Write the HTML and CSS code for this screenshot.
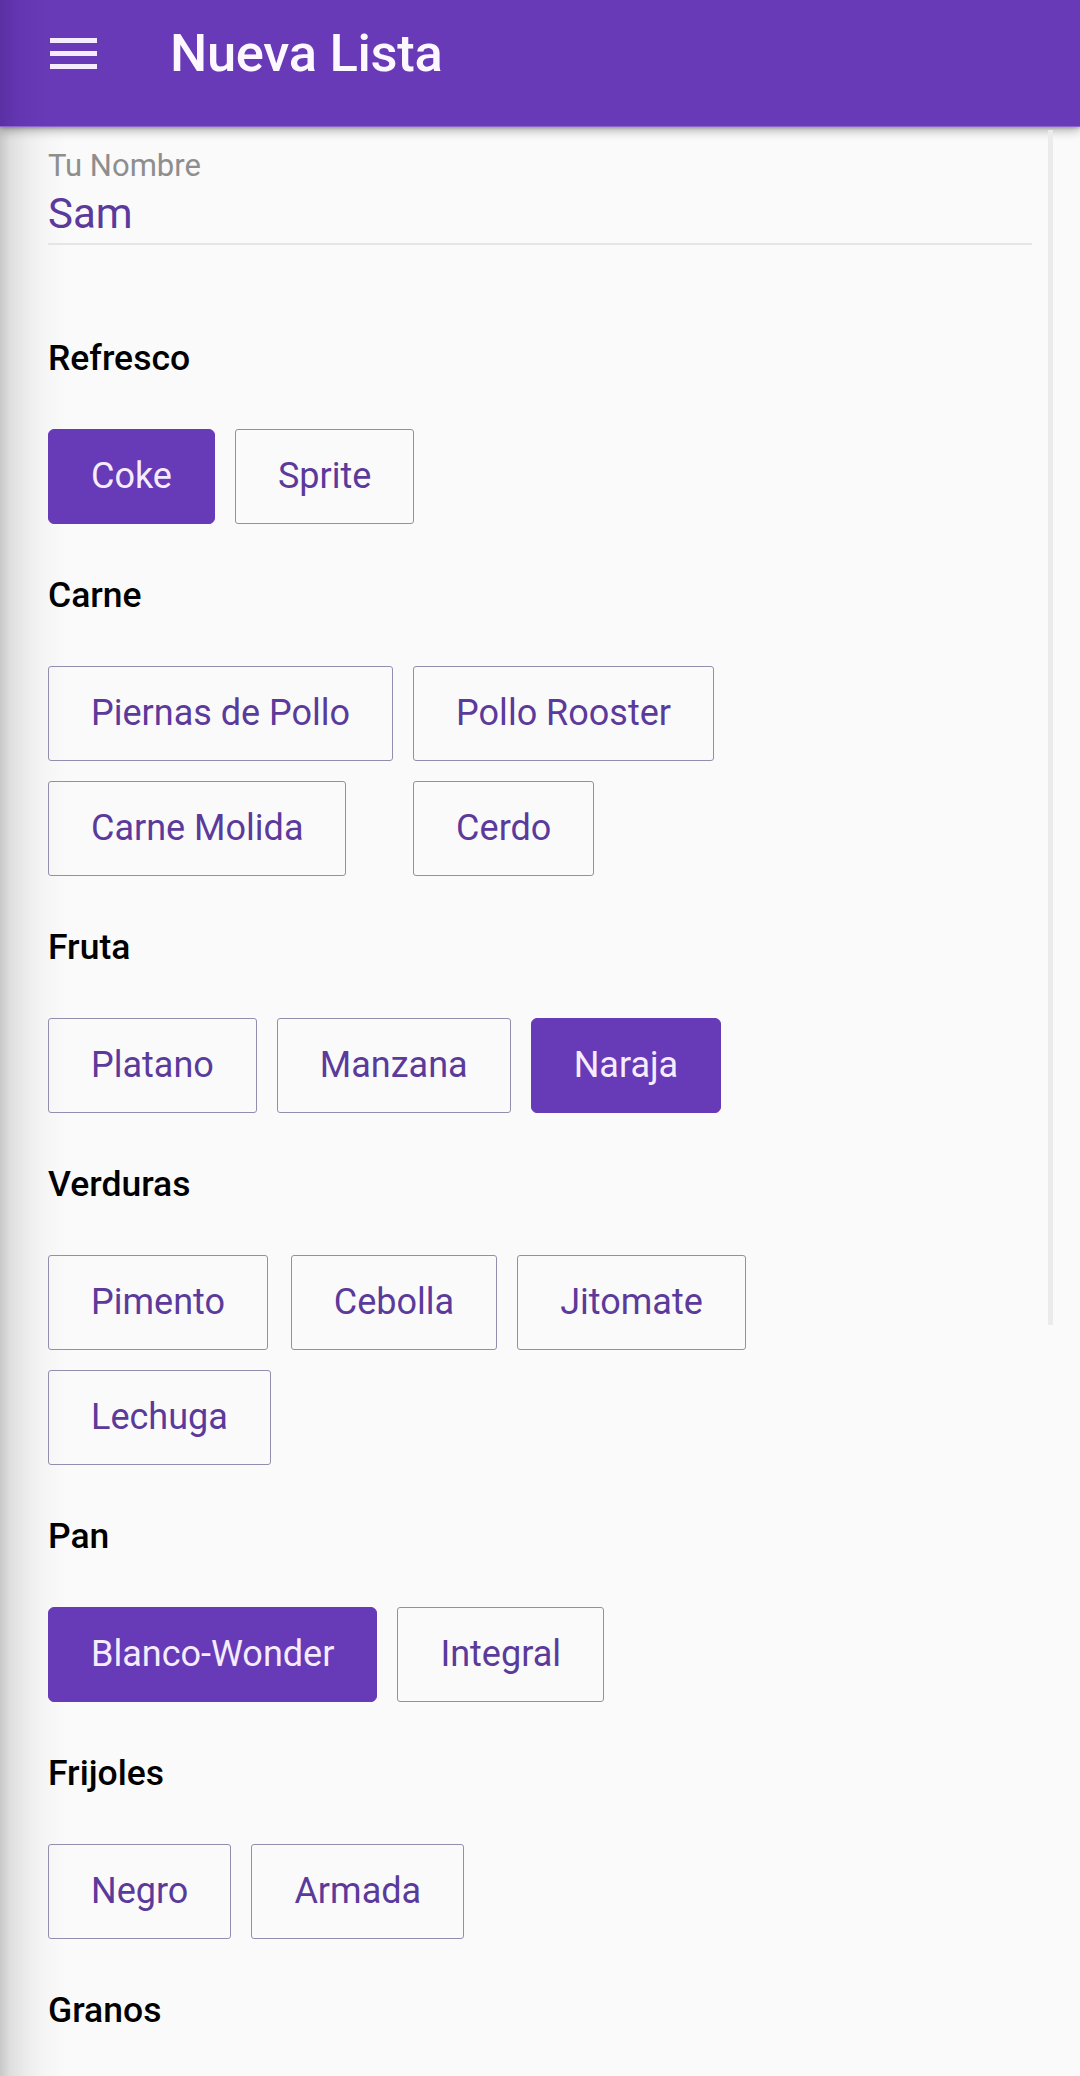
FILE: index.html
```html
<!DOCTYPE html>
<html lang="es">
<head>
<meta charset="utf-8">
<title>Nueva Lista</title>
<link rel="stylesheet" href="styles.css">
</head>
<body>
<header class="appbar">
  <svg class="menu-icon" width="47" height="31" viewBox="0 0 47 31" aria-hidden="true">
    <rect x="0" y="0" width="47" height="5" fill="#f6ecff"/>
    <rect x="0" y="13" width="47" height="5" fill="#f6ecff"/>
    <rect x="0" y="26" width="47" height="5" fill="#f6ecff"/>
  </svg>
  <h1 class="title">Nueva Lista</h1>
</header>

<div class="scrollbar"></div>

<main class="content">
  <div class="field">
    <div class="field-label">Tu Nombre</div>
    <div class="field-value">Sam</div>
  </div>

  <section class="group">
    <h2 class="group-title">Refresco</h2>
    <div class="options cols-2">
      <button class="opt selected">Coke</button>
      <button class="opt">Sprite</button>
    </div>
  </section>

  <section class="group">
    <h2 class="group-title">Carne</h2>
    <div class="options cols-2">
      <button class="opt">Piernas de Pollo</button>
      <button class="opt">Pollo Rooster</button>
      <button class="opt">Carne Molida</button>
      <button class="opt">Cerdo</button>
    </div>
  </section>

  <section class="group">
    <h2 class="group-title">Fruta</h2>
    <div class="options cols-3">
      <button class="opt">Platano</button>
      <button class="opt">Manzana</button>
      <button class="opt selected">Naraja</button>
    </div>
  </section>

  <section class="group">
    <h2 class="group-title">Verduras</h2>
    <div class="options cols-3">
      <button class="opt">Pimento</button>
      <button class="opt">Cebolla</button>
      <button class="opt">Jitomate</button>
      <button class="opt">Lechuga</button>
    </div>
  </section>

  <section class="group">
    <h2 class="group-title">Pan</h2>
    <div class="options cols-2">
      <button class="opt selected">Blanco-Wonder</button>
      <button class="opt">Integral</button>
    </div>
  </section>

  <section class="group">
    <h2 class="group-title">Frijoles</h2>
    <div class="options cols-2">
      <button class="opt">Negro</button>
      <button class="opt">Armada</button>
    </div>
  </section>

  <section class="group">
    <h2 class="group-title">Granos</h2>
  </section>
</main>
</body>
</html>
```

FILE: styles.css
```css
* {
  box-sizing: border-box;
}

html, body {
  margin: 0;
  padding: 0;
}

body {
  position: relative;
  width: 1080px;
  min-height: 2076px;
  font-family: Roboto, "Noto Sans", "Liberation Sans", sans-serif;
  background-color: #fafafa;
  background-image: linear-gradient(to right, #c8c8c8 0px, #dedede 10px, #ececec 26px, #f5f5f5 44px, #fafafa 66px);
  color: #111;
  overflow: hidden;
}

.appbar {
  display: flex;
  align-items: center;
  height: 127px;
  padding: 0 0 19px 50px;
  background-color: #673ab7;
  background-image: linear-gradient(to right, #5a30a3 0px, #6536b2 20px, #683ab7 50px);
  box-shadow: 0 3px 10px rgba(0, 0, 0, 0.33), 0 1px 3px rgba(0, 0, 0, 0.2);
  border-bottom: 1px solid #8a64cc;
}

.menu-icon {
  display: block;
  flex: none;
}

.title {
  margin: 0 0 0 73px;
  font-size: 52.5px;
  line-height: 1;
  font-weight: 500;
  color: #fdf8ff;
  letter-spacing: -0.3px;
}

.scrollbar {
  position: absolute;
  left: 1048px;
  top: 130px;
  width: 5px;
  height: 1195px;
  background: #ebebeb;
}

.content {
  padding: 0 48px;
}

.field {
  padding-top: 21px;
  padding-bottom: 4px;
  border-bottom: 2px solid #e5e5e5;
}

.field-label {
  font-size: 31px;
  line-height: 36px;
  color: #8e8e8e;
}

.field-value {
  margin-top: 5px;
  font-size: 42px;
  line-height: 50px;
  color: #5b3a9c;
}

.group {
  margin-top: 51px;
}

.field + .group {
  margin-top: 93px;
}

.group-title {
  margin: 0 0 51px 0;
  font-size: 35.5px;
  line-height: 40px;
  font-weight: 500;
  color: #000;
}

.options {
  display: grid;
  justify-content: start;
  justify-items: start;
  column-gap: 20px;
  row-gap: 20px;
}

.cols-2 {
  grid-template-columns: repeat(2, auto);
}

.cols-3 {
  grid-template-columns: repeat(3, auto);
}

.opt {
  display: block;
  margin: 0;
  height: 95px;
  padding: 25px 42px;
  font-family: Roboto, "Noto Sans", "Liberation Sans", sans-serif;
  font-size: 36px;
  line-height: 43px;
  font-weight: 400;
  color: #5b3a9c;
  background: transparent;
  border: 1px solid #948eae;
  border-radius: 3px;
  white-space: nowrap;
}

.opt.selected {
  color: #f6ecff;
  background: #673ab7;
  border-color: #673ab7;
  border-radius: 6px;
}
```
